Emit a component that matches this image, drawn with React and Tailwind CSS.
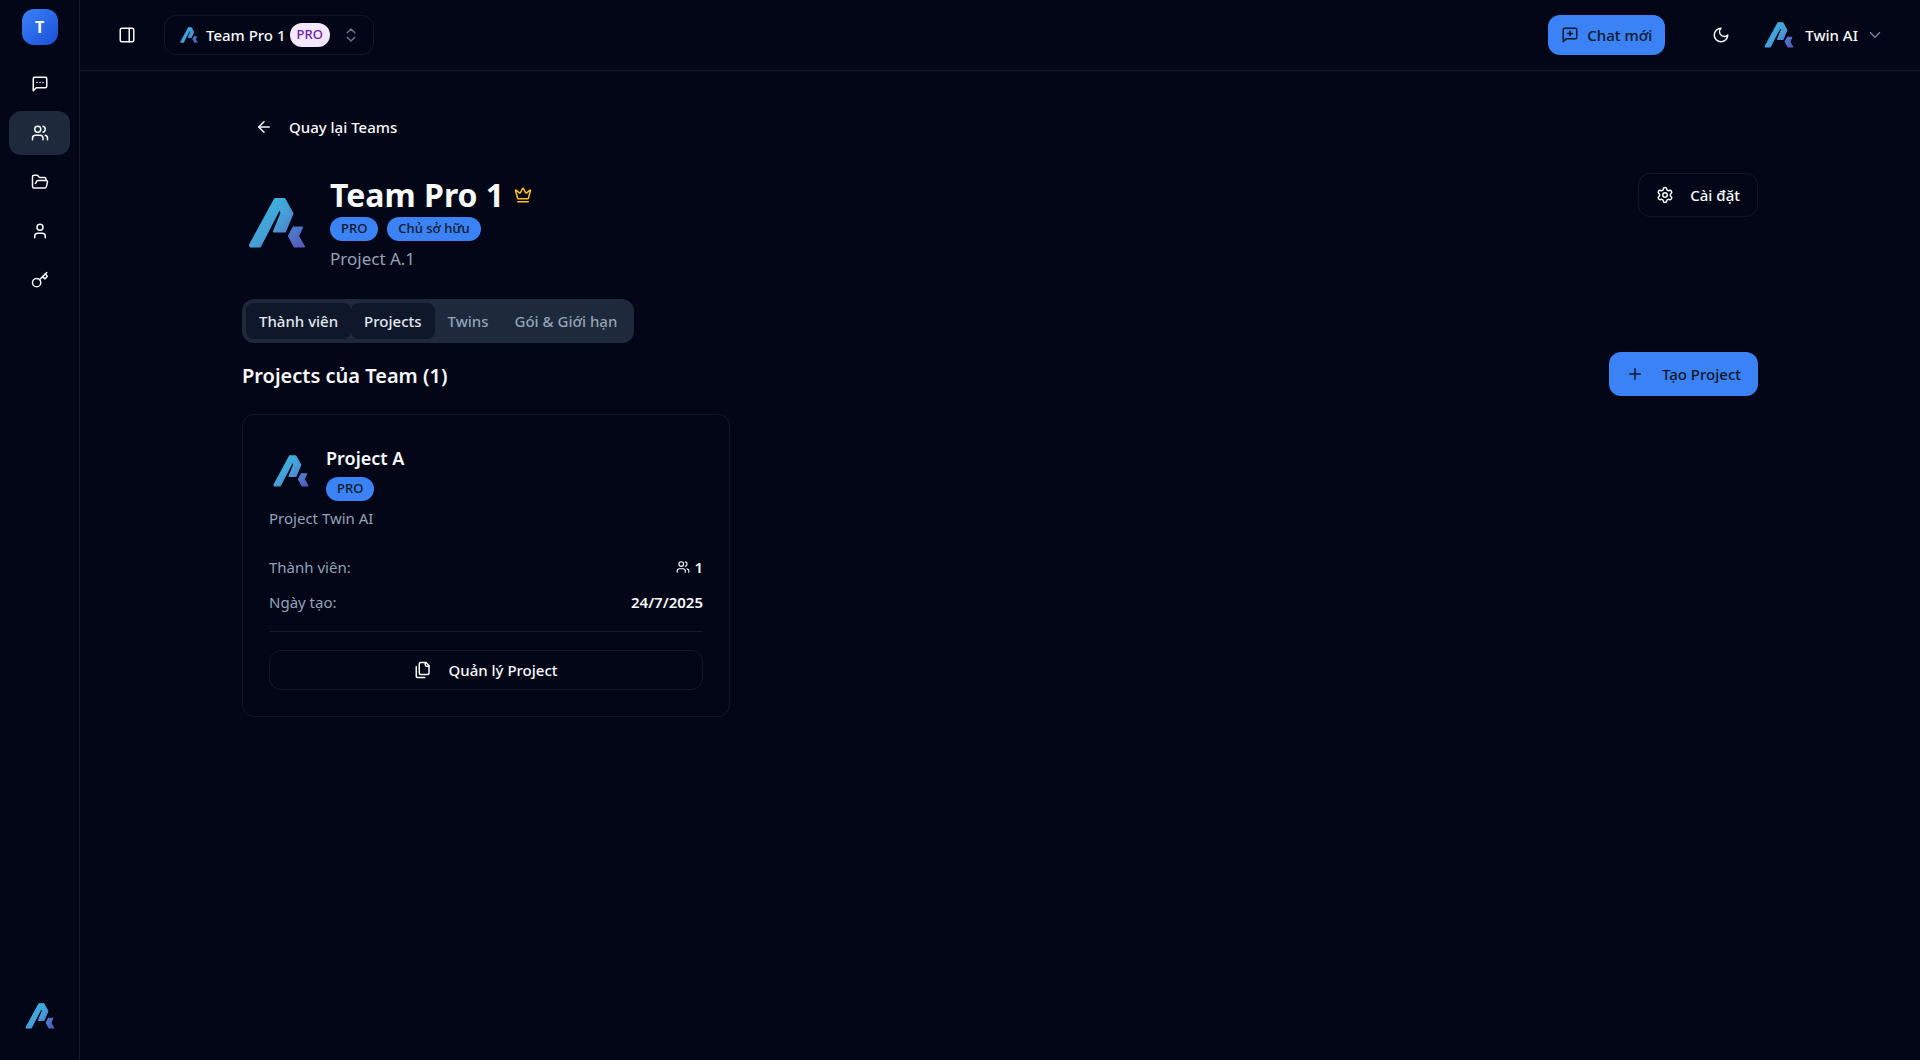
import { useId } from "react";
import {
  ArrowLeft,
  ChevronDown,
  ChevronsUpDown,
  Crown,
  FolderOpen,
  Key,
  PanelRight,
  Plus,
  Settings,
  User,
  Users,
} from "lucide-react";

function Icon({ className, children }) {
  return (
    <svg
      viewBox="0 0 24 24"
      fill="none"
      stroke="currentColor"
      strokeWidth="2"
      strokeLinecap="round"
      strokeLinejoin="round"
      className={className}
      aria-hidden="true"
    >
      {children}
    </svg>
  );
}

const BUBBLE = "M21 15a2 2 0 0 1-2 2H7l-4 4V5a2 2 0 0 1 2-2h14a2 2 0 0 1 2 2z";

function ChatDots({ className }) {
  return (
    <Icon className={className}>
      <path d={BUBBLE} />
      <path d="M8 10h.01M12 10h.01M16 10h.01" />
    </Icon>
  );
}

function ChatPlus({ className }) {
  return (
    <Icon className={className}>
      <path d={BUBBLE} />
      <path d="M12 7v6M9 10h6" />
    </Icon>
  );
}

function MoonIcon({ className }) {
  return (
    <Icon className={className}>
      <path d="M12 3a6 6 0 0 0 9 9 9 9 0 1 1-9-9Z" />
    </Icon>
  );
}

function FilesIcon({ className }) {
  return (
    <Icon className={className}>
      <path d="M20 7h-3a2 2 0 0 1-2-2V2" />
      <path d="M9 18a2 2 0 0 1-2-2V4a2 2 0 0 1 2-2h7l4 4v10a2 2 0 0 1-2 2Z" />
      <path d="M3 7.6v12.8A1.6 1.6 0 0 0 4.6 22h9.8" />
    </Icon>
  );
}

function Logo({ className }) {
  const id = useId();
  return (
    <svg viewBox="0 0 70 70" className={className} role="img" aria-label="Twin AI">
      <defs>
        <linearGradient id={id} gradientUnits="userSpaceOnUse" x1="18" y1="16" x2="62" y2="58">
          <stop offset="0" stopColor="#35b8e0" />
          <stop offset="0.45" stopColor="#4a9ad6" />
          <stop offset="0.75" stopColor="#4f72c8" />
          <stop offset="1" stopColor="#5557b8" />
        </linearGradient>
      </defs>
      <g fill={`url(#${id})`} stroke={`url(#${id})`} strokeWidth="2" strokeLinejoin="round">
        <path d="M33 11H42.500L50.500 25.500L43 43.500H32L39.500 25L38.500 21.500L36.500 22.500L18 58.500H8.500L8 57Z" />
        <path d="M51.500 39.500H60L56 48L62 58.500H52.500L47 48Z" />
      </g>
    </svg>
  );
}

function Badge({ children }) {
  return (
    <span className="flex h-6 w-fit items-center rounded-full bg-[#3b82f6] px-[11px] text-[13px] font-medium text-[#0f172a]">
      {children}
    </span>
  );
}

const NAV = [
  { label: "Chat", icon: ChatDots },
  { label: "Teams", icon: Users, active: true },
  { label: "Projects", icon: FolderOpen },
  { label: "Twins", icon: User },
  { label: "API Keys", icon: Key },
];

function Sidebar() {
  return (
    <aside className="flex w-20 shrink-0 flex-col items-center border-r border-[#141d2e] pt-[9px] pb-[26px]">
      <div className="flex size-9 items-center justify-center rounded-xl bg-linear-to-br from-[#3b82f6] to-[#1d4ed8] text-base font-bold text-white">
        T
      </div>
      <nav className="mt-[17px] flex w-full flex-col gap-[5px] px-[9px]">
        {NAV.map(({ label, icon: NavIcon, active }) => (
          <a
            key={label}
            href="#"
            aria-label={label}
            className={
              active
                ? "flex h-11 items-center justify-center rounded-xl bg-[#1e293b]"
                : "flex h-11 items-center justify-center rounded-xl"
            }
          >
            <NavIcon className="size-[18px]" />
          </a>
        ))}
      </nav>
      <Logo className="mt-auto size-9" />
    </aside>
  );
}

function Header() {
  return (
    <header className="flex h-[71px] shrink-0 items-center border-b border-[#141d2e] pr-9 pl-[38px]">
      <button aria-label="Thanh bên" className="flex size-[18px] items-center justify-center">
        <PanelRight className="size-[18px]" />
      </button>
      <button className="ml-7 flex h-10 items-center rounded-xl border border-[#111a2a] px-[13px]">
        <Logo className="size-[22px]" />
        <span className="ml-1.5 text-[15px] font-medium">Team Pro 1</span>
        <span className="ml-1 flex h-6 items-center rounded-full bg-[#f3e8ff] px-[7px] text-[13px] font-medium text-[#6b21a8]">
          PRO
        </span>
        <ChevronsUpDown className="ml-3 size-[18px] text-[#94a3b8] opacity-70" />
      </button>
      <button className="ml-auto flex h-10 items-center gap-2 rounded-xl bg-[#3b82f6] px-[13px] text-[15px] font-medium text-[#0f172a]">
        <ChatPlus className="size-[18px]" />
        Chat mới
      </button>
      <button aria-label="Giao diện tối" className="ml-9 flex size-10 items-center justify-center">
        <MoonIcon className="size-[18px]" />
      </button>
      <button className="ml-5 flex h-10 items-center text-[15px] font-medium">
        <Logo className="size-9" />
        <span className="ml-2">Twin AI</span>
        <ChevronDown className="ml-2 size-[18px] text-[#94a3b8] opacity-80" />
      </button>
    </header>
  );
}

function TeamHeader() {
  return (
    <div className="mt-[26px] flex items-start justify-between">
      <div className="flex items-center gap-[18px]">
        <Logo className="size-[70px]" />
        <div>
          <h1 className="flex items-center gap-2.5 text-[32px] leading-[44px] font-bold">
            Team Pro 1
            <Crown className="size-[18px] text-[#fbbf24]" />
          </h1>
          <div className="flex gap-[9px]">
            <Badge>PRO</Badge>
            <Badge>Chủ sở hữu</Badge>
          </div>
          <p className="mt-1 text-[17px] leading-7 text-[#94a3b8]">Project A.1</p>
        </div>
      </div>
      <button className="flex h-11 items-center gap-4 rounded-xl border border-[#111a2a] px-[17px] text-[15px] font-medium">
        <Settings className="size-[18px]" />
        Cài đặt
      </button>
    </div>
  );
}

const TABS = [
  { label: "Thành viên", lit: true },
  { label: "Projects", lit: true, selected: true },
  { label: "Twins" },
  { label: "Gói & Giới hạn" },
];

function Tabs() {
  return (
    <div role="tablist" className="mt-[26px] flex h-11 w-fit items-center rounded-xl bg-[#1e293b] px-1">
      {TABS.map(({ label, lit, selected }) => (
        <button
          key={label}
          role="tab"
          aria-selected={selected ? "true" : "false"}
          className={
            lit
              ? "flex h-9 items-center rounded-lg bg-[#0f172a] px-[13px] text-[15px] font-medium text-[#e2e8f0]"
              : "flex h-9 items-center rounded-lg px-[13px] text-[15px] font-medium text-[#94a3b8]"
          }
        >
          {label}
        </button>
      ))}
    </div>
  );
}

function ProjectCard() {
  return (
    <article className="rounded-xl border border-[#111a2a] p-[26px]">
      <div className="flex items-center gap-[13px]">
        <Logo className="size-11" />
        <div>
          <h3 className="mb-0.5 text-[18px] leading-[34px] font-semibold">Project A</h3>
          <Badge>PRO</Badge>
        </div>
      </div>
      <p className="mt-1.5 text-[15px] leading-[22px] text-[#94a3b8]">Project Twin AI</p>
      <dl className="mt-[27px] flex flex-col gap-[13px] text-[15px] leading-[22px]">
        <div className="flex justify-between">
          <dt className="text-[#94a3b8]">Thành viên:</dt>
          <dd className="flex items-center gap-1 font-semibold">
            <Users className="size-3.5" />1
          </dd>
        </div>
        <div className="flex justify-between">
          <dt className="text-[#94a3b8]">Ngày tạo:</dt>
          <dd className="font-semibold">24/7/2025</dd>
        </div>
      </dl>
      <div className="mt-[18px] border-t border-[#141d2e] pt-[18px]">
        <button className="flex h-10 w-full items-center justify-center gap-4 rounded-xl border border-[#111a2a] text-[15px] font-medium">
          <FilesIcon className="size-[18px]" />
          Quản lý Project
        </button>
      </div>
    </article>
  );
}

export default function App() {
  return (
    <div className="flex min-h-screen bg-[#020617] font-['Noto_Sans','Open_Sans',sans-serif] text-[#f8fafc]">
      <Sidebar />
      <div className="flex min-w-0 flex-1 flex-col">
        <Header />
        <main className="mx-auto w-full max-w-[1588px] px-9 pt-9">
          <button className="flex h-10 items-center gap-4 px-[13px] text-[15px] font-medium">
            <ArrowLeft className="size-[18px]" />
            Quay lại Teams
          </button>
          <TeamHeader />
          <Tabs />
          <section className="mt-[9px]">
            <div className="flex items-center justify-between">
              <h2 className="pt-1 text-[20px] font-semibold">Projects của Team (1)</h2>
              <button className="flex h-11 items-center gap-[18px] rounded-xl bg-[#3b82f6] px-[17px] text-[15px] font-medium text-[#0f172a]">
                <Plus className="size-[18px]" />
                Tạo Project
              </button>
            </div>
            <div className="mt-[18px] grid grid-cols-3 gap-[26px]">
              <ProjectCard />
            </div>
          </section>
        </main>
      </div>
    </div>
  );
}
